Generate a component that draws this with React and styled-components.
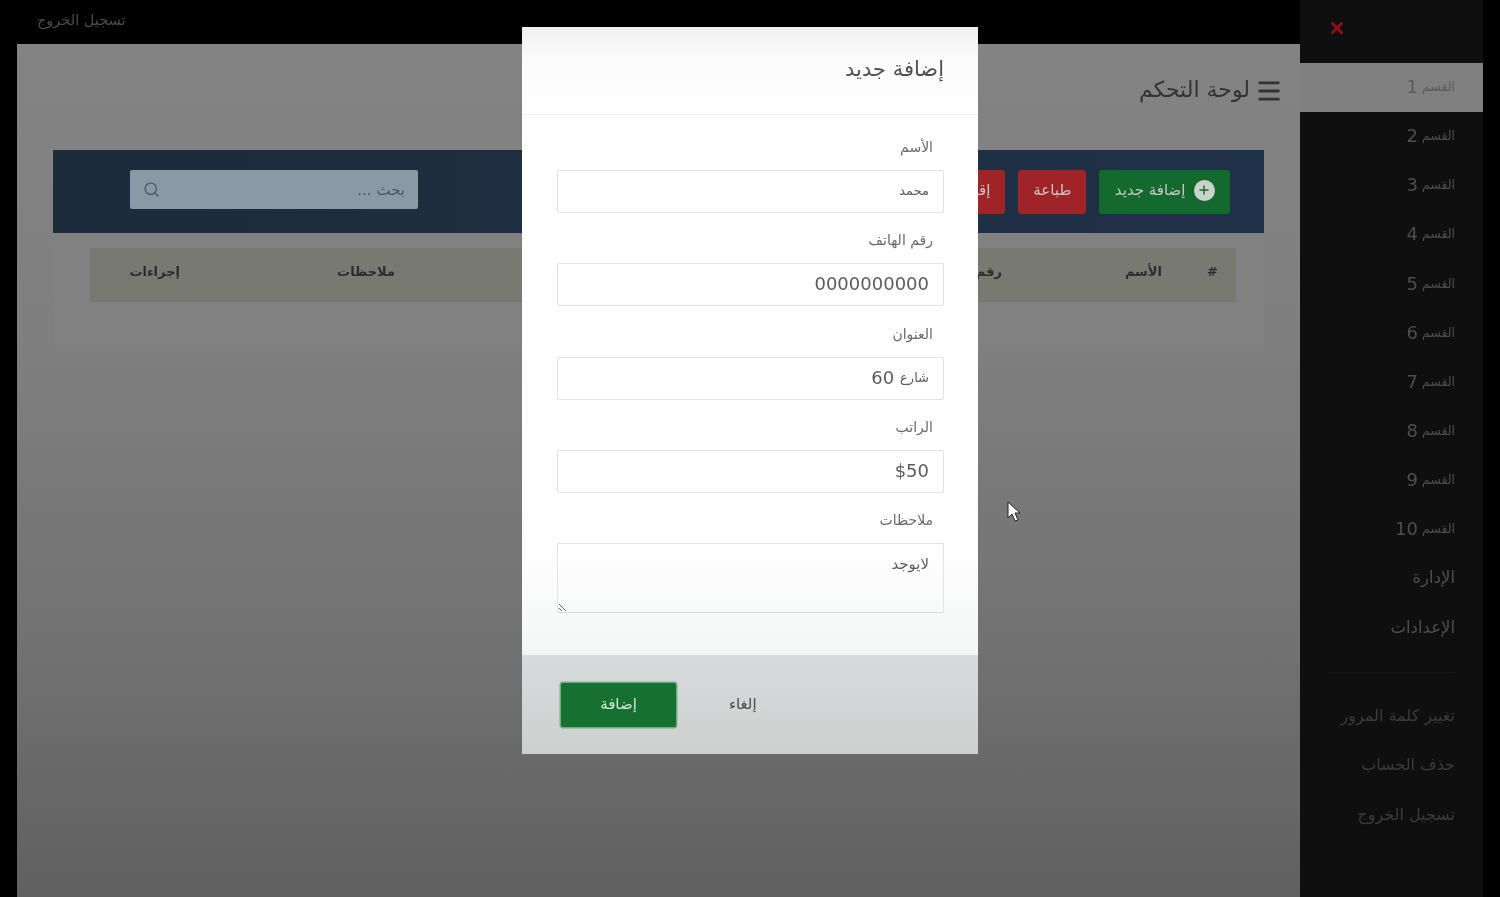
import React from "react";
import styled, { createGlobalStyle } from "styled-components";
import { Search, Menu, X, Plus } from "lucide-react";

const Global = createGlobalStyle`
  html, body { margin: 0; padding: 0; background: #000; height: 100%; overflow: hidden; }
  body { font-family: "DejaVu Sans", "Noto Sans", sans-serif; }
  #root { height: 100%; }
`;
const Page = styled.div`
  position: relative; width: 1500px; height: 897px; box-sizing: border-box;
  padding: 0 17px; display: flex; background: #000; overflow: hidden; filter: blur(0.45px);
`;
const MainColumn = styled.div`flex: 1; display: flex; flex-direction: column; min-width: 0;`;
const TopBar = styled.div`
  height: 44px; flex: none; display: flex; align-items: center; padding: 0 0 4px 20px; box-sizing: border-box;
`;
const Logout = styled.span`font-size: 14.5px; color: #4b4b4b; direction: rtl;`;
const Content = styled.main`
  flex: 1; background: linear-gradient(#838383 0%, #7f7f7f 35%, #727272 70%, #606060 100%);
  padding: 0 36px; display: flex; flex-direction: column; direction: rtl;
`;
const TitleRow = styled.div`
  height: 106px; flex: none; display: flex; align-items: flex-start; gap: 5px; padding: 29px 0 0 0; margin-right: -19px; box-sizing: border-box; color: #333;
`;
const Title = styled.h1`margin: 0; font-size: 22px; line-height: 34px; font-weight: 400; color: #333;`;
const MenuIcon = styled(Menu)`width: 28px; height: 36px; flex: none;`;
const Toolbar = styled.div`
  height: 83px; flex: none; background: linear-gradient(90deg, #1d2c3b, #1f3148); display: flex; justify-content: space-between;
  align-items: flex-start; padding: 20px 34px 0 77px; box-sizing: border-box;
`;
const Actions = styled.div`display: flex; gap: 13px;`;
const ToolButton = styled.button`
  height: 44px; padding: 0 ${p => p.$kind === "green" ? "15.5px" : "15px"} 4px; border: 0; border-radius: 3px; display: flex; align-items: center; gap: 8px;
  background: ${p => p.$kind === "green" ? "#14692f" : "#a02327"}; color: #c8c8c8; font: 400 15px "DejaVu Sans", sans-serif; white-space: nowrap;
`;
const PlusBadge = styled.span`
  width: 21px; height: 21px; border-radius: 50%; background: #c9d3cc; color: #14692f; display: flex; align-items: center; justify-content: center;
`;
const SearchBox = styled.label`
  width: 288px; height: 39px; border-radius: 2px; background: #8b99a6; display: flex; align-items: center; padding: 0 13px; box-sizing: border-box;
`;
const SearchInput = styled.input`
  flex: 1; min-width: 0; border: 0; outline: 0; padding: 0; background: none; font: 400 15px "DejaVu Sans", sans-serif; direction: rtl;
  &::placeholder { color: #4c5761; opacity: 1; }
`;
const TableCard = styled.div`
  height: 112px; flex: none; padding: 15px 28px 0 37px; box-sizing: border-box; background: #818181;
`;
const HeadRow = styled.div`
  height: 54px; display: grid; grid-template-columns: 56px 160px 200px 200px 207px 215px 1fr; align-items: center; padding: 0 18px 6px 0; box-sizing: border-box;
  background: #787970; border-bottom: 1px solid #74756c; font-size: 13px; font-weight: 700; color: #2c2c2c;
`;
const Sidebar = styled.aside`
  width: 183px; flex: none; background: #0f0f0f; display: flex; flex-direction: column; direction: rtl;
`;
const SideTop = styled.div`height: 63px; flex: none; display: flex; align-items: center; justify-content: flex-end; padding: 0 0 7px 28px; box-sizing: border-box; color: #8c1018;`;
const SideItem = styled.div`
  height: 49.15px; flex: none; display: flex; align-items: center; gap: 4px; padding: 0 28px 2px 0; box-sizing: border-box; font-size: ${p => p.$large ? "16.5px" : "12.5px"};
  color: ${p => p.$active ? "#5a5a5a" : "#4e4e4e"}; background: ${p => p.$active ? "#808080" : "transparent"};
`;
const SideNum = styled.span`font-size: 18px;`;
const SideDivider = styled.div`height: 1px; margin: 19px 28px 18px 28px; background: #201414; flex: none;`;
const SideLink = styled.div`
  height: 49.5px; flex: none; display: flex; align-items: center; padding: 0 28px 0 0; box-sizing: border-box; font-size: 16px; color: #3b3b3b;
`;
const Modal = styled.section`
  position: absolute; left: 522px; top: 27px; width: 456px; height: 727px; display: flex; flex-direction: column; direction: rtl;
  background: #fff; overflow: hidden;
`;
const ModalHeader = styled.header`
  height: 88px; flex: none; background: linear-gradient(#efefef, #fbfbfb 35%, #fff); border-bottom: 1px solid #f3f3f3; box-sizing: border-box;
  padding: 24px 34px 0 0;
`;
const ModalTitle = styled.h2`margin: 0; font-size: 21px; line-height: 36px; font-weight: 400; color: #505050;`;
const ModalBody = styled.div`
  flex: 1; padding: 23px 34px 0 35px; display: flex; flex-direction: column;
  background: linear-gradient(#fff 0%, #fff 80%, #f4f5f5 100%);
`;
const Field = styled.div`display: flex; flex-direction: column; gap: 10px; height: 93.25px; flex: none;`;
const FieldLabel = styled.label`flex: none; font-size: 14px; line-height: 19px; height: 22px; color: #6a6a6a; padding-right: 11px;`;
const FieldBox = styled.div`
  height: 43px; flex: none; box-sizing: border-box; width: 100%; border: 1px solid #e3e3e3; border-radius: 2px; padding: 0 14px 2px;
  display: flex; align-items: center; gap: 6px; font-size: 13px; color: #5c5c5c; background: #fff;
`;
const BoxNum = styled.span`font-size: 18px;`;
const NoteArea = styled.textarea`
  height: 70px; flex: none; box-sizing: border-box; width: 100%; border: 1px solid #e3e3e3; border-bottom-color: #dadada; border-radius: 2px; padding: 11px 14px;
  font: 400 15px "DejaVu Sans", sans-serif; color: #5c5c5c; background: transparent; outline: 0; direction: rtl; display: block;
`;
const ModalFooter = styled.footer`
  height: 99px; flex: none; background: linear-gradient(#d8dbdb, #ced0d0); display: flex; direction: ltr; align-items: center; padding: 0 0 0 39px; gap: 53px; box-sizing: border-box;
`;
const Submit = styled.button`
  width: 115px; height: 44px; border: 0; border-radius: 2px; background: #16702f; color: #d6e6da; box-shadow: 0 0 0 1.5px #6fae83; padding: 0 0 2px;
  font: 400 15px "DejaVu Sans", sans-serif;
`;
const Cancel = styled.span`font-size: 15px; color: #4a4a4a; margin-bottom: 2px;`;
const Cursor = styled.svg`position: absolute; left: 1007px; top: 501px; width: 13px; height: 21px;`;

const sections = [1,2,3,4,5,6,7,8,9,10];

export default function App() {
  return (
    <>
      <Global />
      <Page>
        <MainColumn>
          <TopBar><Logout>تسجيل الخروج</Logout></TopBar>
          <Content>
            <TitleRow>
              <MenuIcon strokeWidth={2.4} />
              <Title>لوحة التحكم</Title>
            </TitleRow>
            <Toolbar>
              <Actions>
                <ToolButton $kind="green"><PlusBadge><Plus size={14} strokeWidth={2.5} /></PlusBadge>إضافة جديد</ToolButton>
                <ToolButton>طباعة</ToolButton>
                <ToolButton>إقرار</ToolButton>
              </Actions>
              <SearchBox>
                <SearchInput placeholder="بحث ..." readOnly />
                <Search size={17} color="#4f5a64" />
              </SearchBox>
            </Toolbar>
            <TableCard>
              <HeadRow>
                <span>#</span><span>الأسم</span><span>رقم الهاتف</span><span>العنوان</span><span>الراتب</span><span>ملاحظات</span><span>إجراءات</span>
              </HeadRow>
            </TableCard>
          </Content>
        </MainColumn>
        <Sidebar>
          <SideTop><X size={18} strokeWidth={4} /></SideTop>
          {sections.map((n, i) => <SideItem key={n} $active={i === 0}>القسم <SideNum>{n}</SideNum></SideItem>)}
          <SideItem $large>الإدارة</SideItem>
          <SideItem $large>الإعدادات</SideItem>
          <SideDivider />
          <SideLink>تغيير كلمة المرور</SideLink>
          <SideLink>حذف الحساب</SideLink>
          <SideLink>تسجيل الخروج</SideLink>
        </Sidebar>
        <Modal>
          <ModalHeader><ModalTitle>إضافة جديد</ModalTitle></ModalHeader>
          <ModalBody>
            <Field><FieldLabel>الأسم</FieldLabel><FieldBox role="textbox">محمد</FieldBox></Field>
            <Field><FieldLabel>رقم الهاتف</FieldLabel><FieldBox role="textbox"><BoxNum>0000000000</BoxNum></FieldBox></Field>
            <Field><FieldLabel>العنوان</FieldLabel><FieldBox role="textbox">شارع <BoxNum>60</BoxNum></FieldBox></Field>
            <Field><FieldLabel>الراتب</FieldLabel><FieldBox role="textbox"><BoxNum dir="ltr">$50</BoxNum></FieldBox></Field>
            <Field><FieldLabel>ملاحظات</FieldLabel><NoteArea readOnly value="لايوجد" /></Field>
          </ModalBody>
          <ModalFooter>
            <Submit>إضافة</Submit>
            <Cancel>إلغاء</Cancel>
          </ModalFooter>
        </Modal>
        <Cursor viewBox="0 0 13 21"><path d="M1 1v16l4-4 3 7 3-1-3-7h5z" fill="#fff" stroke="#222" strokeWidth="1" /></Cursor>
      </Page>
    </>
  );
}
